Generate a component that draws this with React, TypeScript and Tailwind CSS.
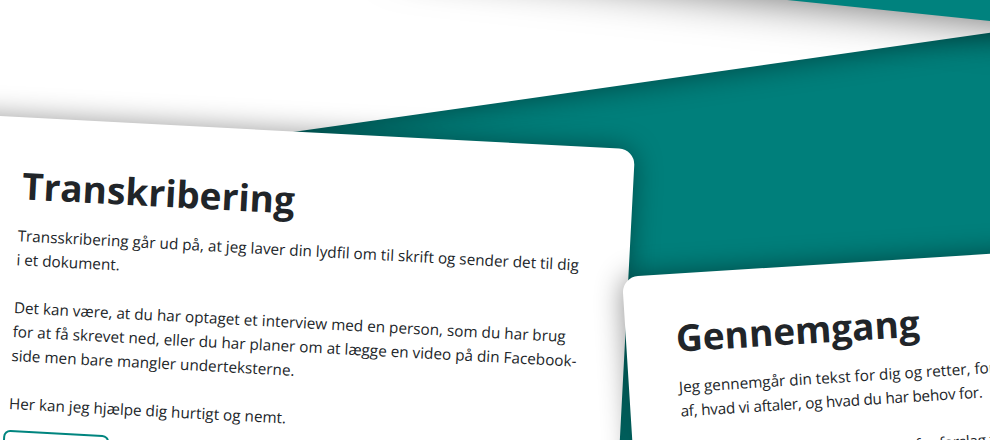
import React from "react";

export default function App() {
  return (
    <div className="relative w-[990px] h-[440px] overflow-hidden bg-[#007f7b] font-['Open_Sans',sans-serif] text-[#212529]">
      {/* white diagonal band */}
      <div className="absolute left-[-100px] top-[-412px] w-[1600px] h-[600px] origin-bottom-left rotate-[-8.1deg] bg-white shadow-[0_0_30px_rgba(0,0,0,0.45)]" />
      {/* top-right teal wedge */}
      <div className="absolute left-[400px] top-[-340.3px] w-[900px] h-[300px] origin-bottom-left rotate-[5.9deg] bg-[#00827e] shadow-[0_0_45px_rgba(0,0,0,0.6)]" />

      {/* card 1 */}
      <div className="absolute left-[-40px] top-[113.9px] w-[676px] h-[520px] origin-top-left rotate-[3deg] rounded-[16px] bg-white shadow-[0_0_28px_rgba(0,0,0,0.4)]">
        <div className="flex flex-col pl-[64px] pt-[46px]">
          <h2 className="ml-[2px] text-[37px] font-bold leading-[1.2] mb-[15.6px] whitespace-nowrap">Transkribering</h2>
          <div className="text-[15.3px] leading-[24px] whitespace-nowrap flex flex-col gap-[24px]">
            <p>
              Transskribering går ud på, at jeg laver din lydfil om til skrift og sender det til dig
              <br />i et dokument.
            </p>
            <p>
              Det kan være, at du har optaget et interview med en person, som du har brug
              <br />
              for at få skrevet ned, eller du har planer om at lægge en video på din Facebook-
              <br />
              side men bare mangler underteksterne.
            </p>
            <p>Her kan jeg hjælpe dig hurtigt og nemt.</p>
          </div>
          <button className="mt-[15px] ml-[-4px] w-[106px] h-[40px] rounded-[7px] border-2 border-[#00857f] text-[#00857f] text-[15px] font-semibold">
            Læs mere
          </button>
        </div>
      </div>

      {/* card 2 */}
      <div className="absolute left-[622px] top-[277px] w-[620px] h-[420px] origin-top-left rotate-[-3.6deg] rounded-[16px] bg-white shadow-[0_0_28px_rgba(0,0,0,0.45)]">
        <div className="flex flex-col pl-[50px] pt-[42px]">
          <h2 className="text-[37px] font-bold leading-[1.2] mb-[15px] whitespace-nowrap">Gennemgang</h2>
          <div className="text-[15.3px] leading-[24px] whitespace-nowrap flex flex-col gap-[24px]">
            <p>
              Jeg gennemgår din tekst for dig og retter, foreslår eller kommenterer – alt afhængig
              <br />
              <span className="tracking-[-0.25px]">af, hvad vi aftaler, og hvad du har behov for.</span>
            </p>
            <p className="tracking-[-0.25px]">Måske har du egentligt bare brug for forslag til, hvordan teksten kan blive bedre.</p>
          </div>
        </div>
      </div>
    </div>
  );
}
